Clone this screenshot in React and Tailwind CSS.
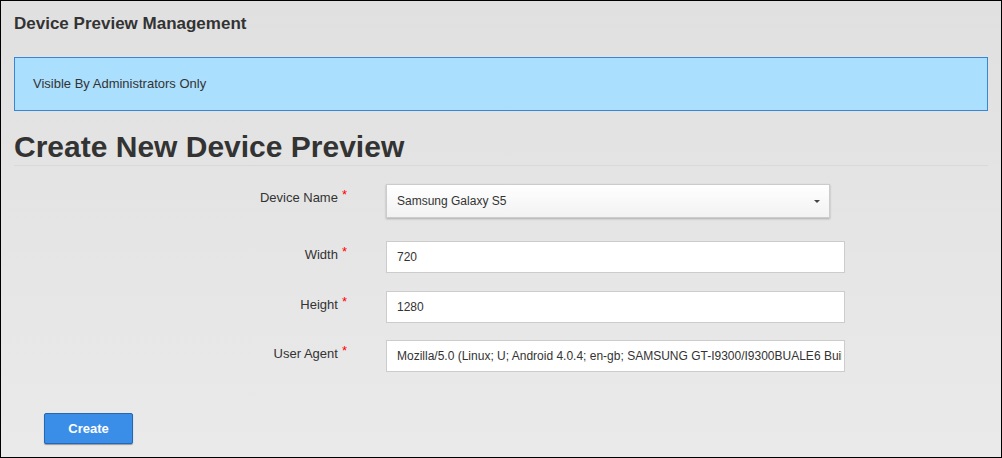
import React from "react";

const font = { fontFamily: '"Liberation Sans", Arial, sans-serif' };

function Label({ children }) {
  return (
    <div className="w-[333px] shrink-0 text-right pt-[6px] text-[13px] leading-[16px] text-[#333]">
      {children}
      <span className="relative -top-[3px] ml-[4px] text-[#ff0000]">*</span>
    </div>
  );
}

function TextInput({ value }) {
  return (
    <input
      readOnly
      value={value}
      style={font}
      className="w-[459px] h-[32px] bg-white border border-[#cccccc] pl-[10px] pr-[2px] outline-none text-[12px] text-[#333]"
    />
  );
}

export default function App() {
  return (
    <div
      style={font}
      className="w-[1002px] h-[458px] box-border border border-black bg-gradient-to-b from-[#e0e0e0] to-[#eaeaea] px-[13px] pt-[13px] overflow-hidden"
    >
      <div className="text-[17px] leading-[20px] font-bold text-[#333]">
        Device Preview Management
      </div>

      <div className="mt-[23px] h-[54px] border border-[#3a86d6] bg-[#abdffe] pl-[18px] flex items-center text-[13px] text-[#333]">
        Visible By Administrators Only
      </div>

      <div className="mt-[21px] pb-[3px] border-b border-[#d9d9d9] text-[30px] leading-[30px] font-bold text-[#333]">
        Create New Device Preview
      </div>

      <div className="mt-[18px] flex flex-col">
        <div className="flex gap-[39px]">
          <Label>Device Name</Label>
          <div className="w-[444px] h-[34px] border border-[#cccccc] bg-gradient-to-b from-white to-[#f2f2f2] shadow-[0_1px_2px_rgba(0,0,0,0.25)] pl-[10px] pr-[9px] flex items-center justify-between text-[12px] text-[#333]">
            <span>Samsung Galaxy S5</span>
            <span className="w-0 h-0 border-l-[3px] border-r-[3px] border-t-[3px] border-l-transparent border-r-transparent border-t-[#444]"></span>
          </div>
        </div>

        <div className="flex gap-[39px] mt-[23px]">
          <Label>Width</Label>
          <TextInput value="720" />
        </div>

        <div className="flex gap-[39px] mt-[18px]">
          <Label>Height</Label>
          <TextInput value="1280" />
        </div>

        <div className="flex gap-[39px] mt-[17px]">
          <Label>User Agent</Label>
          <TextInput value="Mozilla/5.0 (Linux; U; Android 4.0.4; en-gb; SAMSUNG GT-I9300/I9300BUALE6 Build/IMM76D) AppleWebKit/534.30" />
        </div>
      </div>

      <div className="mt-[41px] pl-[30px]">
        <button className="w-[89px] h-[31px] bg-[#3a8ee8] border border-[#2566b5] rounded-[2px] shadow-[0_1px_1px_rgba(0,0,0,0.35)] text-white text-[13px] font-bold">
          Create
        </button>
      </div>
    </div>
  );
}
